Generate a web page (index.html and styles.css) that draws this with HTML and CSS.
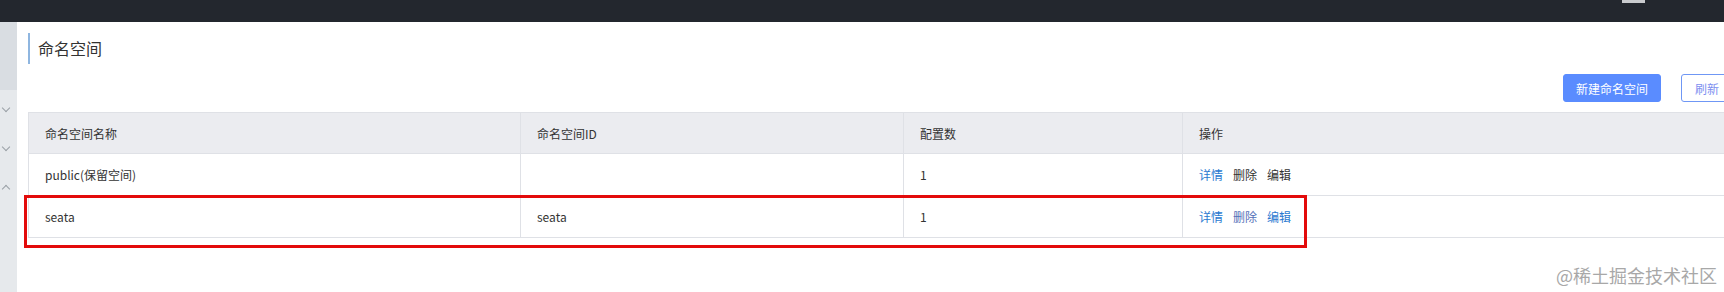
FILE: index.html
```html
<!DOCTYPE html>
<html lang="zh">
<head>
<meta charset="utf-8">
<title>命名空间</title>
<link rel="stylesheet" href="styles.css">
</head>
<body>
<header class="topbar"><span class="topbar-mark"></span></header>
<div class="layout">
  <aside class="sidebar">
    <div class="sidebar-top"></div>
    <div class="sidebar-rest">
      <span class="chev down"></span>
      <span class="chev down"></span>
      <span class="chev up"></span>
    </div>
  </aside>
  <main class="main">
    <h1 class="page-title">命名空间</h1>
    <div class="actions">
      <button class="btn btn-primary">新建命名空间</button>
      <button class="btn btn-outline">刷新</button>
    </div>
    <table class="grid">
      <colgroup>
        <col class="c1"><col class="c2"><col class="c3"><col class="c4">
      </colgroup>
      <thead>
        <tr><th>命名空间名称</th><th>命名空间ID</th><th>配置数</th><th>操作</th></tr>
      </thead>
      <tbody>
        <tr>
          <td>public(保留空间)</td><td></td><td>1</td>
          <td><a class="op link">详情</a><a class="op">删除</a><a class="op">编辑</a></td>
        </tr>
        <tr>
          <td>seata</td><td>seata</td><td>1</td>
          <td><a class="op link">详情</a><a class="op link2">删除</a><a class="op link">编辑</a></td>
        </tr>
      </tbody>
    </table>
  </main>
</div>
<div class="highlight"></div>
<div class="watermark">@稀土掘金技术社区</div>
</body>
</html>
```
FILE: styles.css
```css
html, body {
  margin: 0;
  padding: 0;
  width: 1724px;
  height: 292px;
  overflow: hidden;
  background: #fff;
  font-family: "Noto Sans CJK SC", "Noto Sans", sans-serif;
  color: #333;
}
body { position: relative; }

.topbar {
  height: 22px;
  background: #23272e;
  position: relative;
}
.topbar-mark {
  position: absolute;
  left: 1622px;
  top: 0;
  width: 23px;
  height: 3px;
  background: #c9cbce;
}

.layout {
  display: flex;
  height: 270px;
}
.sidebar {
  width: 17px;
  flex: none;
  display: flex;
  flex-direction: column;
}
.sidebar-top {
  height: 68px;
  background: #d9dde2;
}
.sidebar-rest {
  flex: 1;
  background: #e6e9ec;
  display: flex;
  flex-direction: column;
  padding-top: 15px;
  gap: 33px;
}
.chev {
  display: block;
  width: 5px;
  height: 5px;
  margin-left: 3px;
  border-right: 1px solid #9aa0a6;
  border-bottom: 1px solid #9aa0a6;
}
.chev.down { transform: rotate(45deg); }
.chev.up { transform: rotate(-135deg); margin-top: 3px; }

.main {
  width: 1705px;
  flex: none;
  padding-left: 11px;
}
.page-title {
  margin: 11px 0 0 0;
  height: 31px;
  line-height: 31px;
  border-left: 2px solid #8fb6e0;
  padding-left: 8px;
  font-size: 16px;
  font-weight: normal;
  color: #333;
}
.actions {
  display: flex;
  justify-content: flex-end;
  gap: 20px;
  margin-top: 10px;
}
.btn {
  box-sizing: border-box;
  height: 28px;
  font-family: inherit;
  font-size: 12px;
  border-radius: 3px;
  padding: 0 13px;
  white-space: nowrap;
  cursor: pointer;
}
.btn-primary {
  width: 98px;
  padding: 0;
  background: #5a8cff;
  border: 1px solid #5a8cff;
  color: #fff;
}
.btn-outline {
  background: #fff;
  border: 1px solid #6f97f5;
  color: #7d8ff0;
}

.grid {
  margin-top: 10px;
  width: 1705px;
  border-collapse: collapse;
  table-layout: fixed;
  font-size: 12px;
}
.grid .c1 { width: 492px; }
.grid .c2 { width: 383px; }
.grid .c3 { width: 279px; }
.grid th, .grid td {
  height: 41px;
  padding: 0 16px;
  text-align: left;
  font-weight: normal;
  color: #333;
  border: 1px solid #dfe1e6;
  border-top: none;
  white-space: nowrap;
}
.grid thead th {
  background: #ebecf0;
  border-top: 1px solid #dfe1e6;
  height: 40px;
}
.grid tbody td { height: 41px; }
.op {
  margin-right: 10px;
  color: #333;
}
.op.link { color: #2a79d0; }
.op.link2 { color: #5470b8; }

.highlight {
  position: absolute;
  left: 24px;
  top: 195px;
  width: 1277px;
  height: 47px;
  border: 3px solid #e30b0b;
}
.watermark {
  position: absolute;
  right: 7px;
  top: 264px;
  font-size: 18px;
  color: #a8a8a8;
  line-height: 22px;
}
```
